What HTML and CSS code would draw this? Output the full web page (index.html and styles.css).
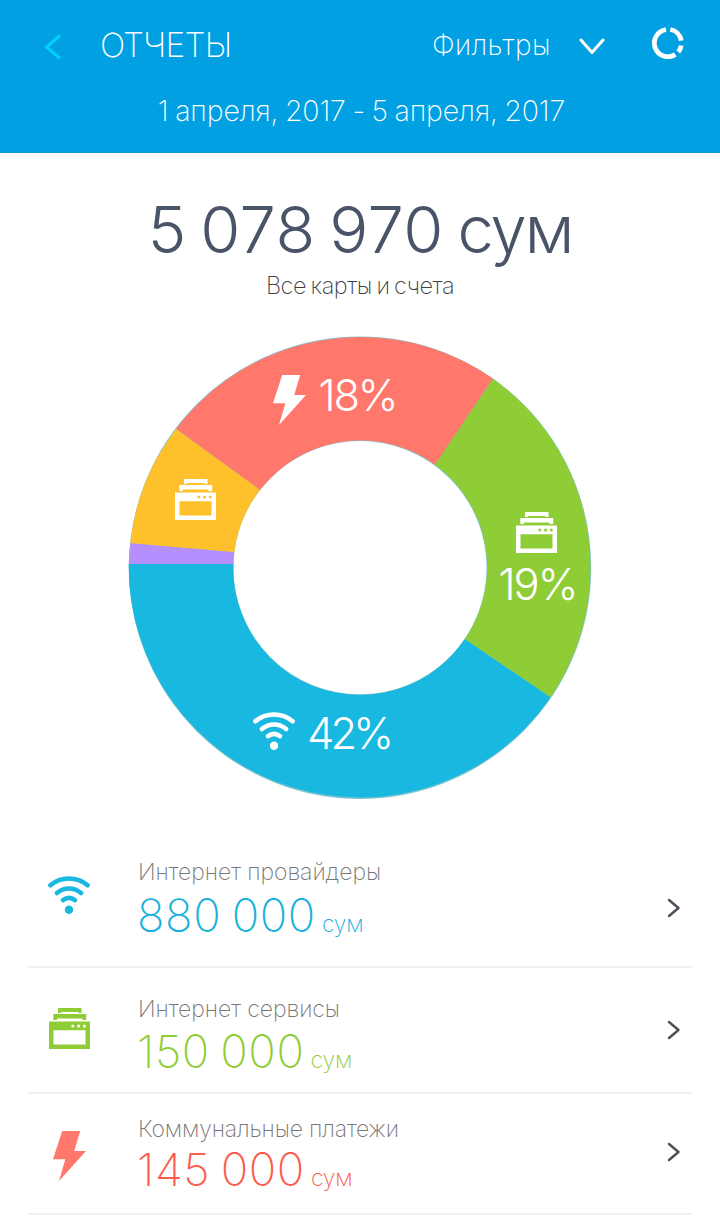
FILE: index.html
```html
<!DOCTYPE html>
<html lang="ru">
<head>
<meta charset="utf-8">
<title>Отчеты</title>
<link rel="stylesheet" href="styles.css">
</head>
<body>
<svg class="defs" width="0" height="0" aria-hidden="true">
  <defs>
    <symbol id="wifi" viewBox="0 0 42 38">
      <g fill="none" stroke="currentColor" stroke-width="4.6" stroke-linecap="round">
        <path d="M2.4 9.2C13 .3 29 .3 39.6 9.2"/>
        <path d="M8.9 17C16 10.9 26 10.9 33.1 17"/>
        <path d="M15 24.1C18.7 21.4 23.3 21.4 27 24.1"/>
      </g>
      <circle cx="21" cy="33.8" r="4.2" fill="currentColor"/>
    </symbol>
    <symbol id="oven" viewBox="0 0 41 41">
      <path fill="currentColor" fill-rule="evenodd" d="M9 0H32.5V5H29.5V4H12V5H9ZM4.3 6H37.2V12H33.4V10.5H8V12H4.3ZM0 13.5H41V41H0ZM4.5 22.3V36.6H36.5V22.3Z"/>
      <g class="oven-knobs"><circle cx="23.8" cy="18" r="1.5"/><circle cx="29.6" cy="18" r="1.5"/><circle cx="35.4" cy="18" r="1.5"/></g>
    </symbol>
    <symbol id="bolt" viewBox="0 0 33 50">
      <path fill="currentColor" d="M9.2 0H27.2L21.2 20H33L6 50L12.4 28.3H0Z"/>
    </symbol>
    <symbol id="chevron" viewBox="0 0 14 20">
      <path d="M2 2L11.5 10L2 18" fill="none" stroke="currentColor" stroke-width="2.4" stroke-linecap="round" stroke-linejoin="round"/>
    </symbol>
  </defs>
</svg>

<header class="header">
  <div class="bar">
    <svg class="back" width="18" height="26" viewBox="0 0 18 26"><path d="M16 1.5L2.5 13L16 24.5" fill="none" stroke="currentColor" stroke-width="3"/></svg>
    <h1 class="title">ОТЧЕТЫ</h1>
    <div class="filters">Фильтры</div>
    <svg class="drop" width="26" height="18" viewBox="0 0 26 18"><path d="M2 2L13 14.5L24 2" fill="none" stroke="currentColor" stroke-width="3" stroke-linecap="round" stroke-linejoin="round"/></svg>
    <svg class="ring" width="32" height="32" viewBox="0 0 32 32">
      <g fill="none" stroke="currentColor" stroke-width="4.8">
        <path d="M14 2.6A13.6 13.6 0 1 0 23.3 27.5"/>
        <path d="M18.3 2.5A13.6 13.6 0 0 1 29.3 13.7"/>
        <path d="M29.2 18.5A13.6 13.6 0 0 1 26.3 25"/>
      </g>
    </svg>
  </div>
  <div class="period">1 апреля, 2017 - 5 апреля, 2017</div>
</header>

<main>
  <section class="summary">
    <div class="total">5 078 970 <span class="currency">сум</span></div>
    <div class="scope">Все карты и счета</div>
    <svg class="chart" width="720" height="525" viewBox="0 304 720 525">
      <circle cx="360" cy="567.7" r="178.9" fill="none" stroke="#7fc4cf" stroke-width="104.6"/>
      <path fill="#18b8e1" d="M550.6 697.3A231.3 231.3 0 0 1 128.7 564H233.4A126.5 126.5 0 0 0 464.8 639Z"/>
      <path fill="#ff786b" d="M176 429A231.3 231.3 0 0 1 493 378.8L435 464.8A126.5 126.5 0 0 0 260 490Z"/>
      <path fill="#8fcd37" d="M493 378.8A231.3 231.3 0 0 1 550.6 697.3L464.8 639A126.5 126.5 0 0 0 435 464.8Z"/>
      <path fill="#ffc12b" d="M130.2 543.2A231.3 231.3 0 0 1 176 429L260 490A126.5 126.5 0 0 0 234.2 552.2Z"/>
      <path fill="#b68fff" d="M128.7 564A231.3 231.3 0 0 1 130.2 543.2L234.2 552.2A126.5 126.5 0 0 0 233.4 564Z"/>
      <g class="chart-marks">
        <use href="#bolt" x="273" y="375" width="33" height="50"/>
        <text x="318.5" y="411" textLength="80">18%</text>
        <g class="on-yellow"><use href="#oven" x="175" y="479" width="41" height="41"/></g>
        <g class="on-green"><use href="#oven" x="516" y="512" width="41" height="41"/></g>
        <text x="498.5" y="600" textLength="80">19%</text>
        <use href="#wifi" x="253" y="712" width="42" height="38"/>
        <text x="307" y="749" textLength="87">42%</text>
      </g>
    </svg>
  </section>

  <ul class="list">
    <li class="row row-blue">
      <svg class="icon" width="42" height="38"><use href="#wifi"/></svg>
      <div class="info">
        <div class="label">Интернет провайдеры</div>
        <div class="amount">880 000<span class="unit">сум</span></div>
      </div>
      <svg class="more" width="14" height="20"><use href="#chevron"/></svg>
    </li>
    <li class="row row-green">
      <svg class="icon" width="41" height="41"><use href="#oven"/></svg>
      <div class="info">
        <div class="label">Интернет сервисы</div>
        <div class="amount">150 000<span class="unit">сум</span></div>
      </div>
      <svg class="more" width="14" height="20"><use href="#chevron"/></svg>
    </li>
    <li class="row row-red">
      <svg class="icon" width="33" height="50"><use href="#bolt"/></svg>
      <div class="info">
        <div class="label">Коммунальные платежи</div>
        <div class="amount">145 000<span class="unit">сум</span></div>
      </div>
      <svg class="more" width="14" height="20"><use href="#chevron"/></svg>
    </li>
  </ul>
</main>
</body>
</html>
```
FILE: styles.css
```css
* { box-sizing: border-box; }
body {
  margin: 0;
  width: 720px;
  height: 1232px;
  overflow: hidden;
  background: #fff;
  font-family: Inter, "Liberation Sans", sans-serif;
  font-weight: 300;
  white-space: nowrap;
}
svg { display: block; flex: none; }
.defs { position: absolute; }

.header { height: 153px; background: #00a0e3; color: #fff; border-bottom: 1px solid #0d9ccb; }
.bar { display: flex; align-items: center; height: 90px; padding-left: 44px; }
.back { color: #00d2fb; margin-top: 3px; }
.title { margin: 0 0 0 38px; width: 332px; font-size: 33.5px; font-weight: 250; line-height: 44px; letter-spacing: -.8px; }
.filters { width: 147px; font-size: 28px; font-weight: 250; line-height: 40px; letter-spacing: .4px; }
.drop { margin-top: 4px; }
.ring { margin: -4px 0 0 47px; }
.period { padding-left: 3px; text-align: center; font-size: 28.5px; font-weight: 250; line-height: 41px; letter-spacing: -.15px; word-spacing: -1.2px; }

.summary { padding-top: 38px; text-align: center; }
.total { font-size: 65px; font-weight: 275; line-height: 77px; color: #4a5468; word-spacing: -5px; letter-spacing: .4px; }
.currency { letter-spacing: -2px; }
.scope { font-size: 23.5px; font-weight: 250; line-height: 36px; color: #3d3f45; letter-spacing: -.5px; word-spacing: -1.5px; }
.chart-marks { color: #fff; fill: #fff; font-size: 43.5px; font-weight: 300; text-align: left; }
.oven-knobs { fill: var(--knob, #fff); }
.on-yellow { --knob: #ffc12b; }
.on-green { --knob: #8fcd37; }

.list { margin: 0 28px; padding: 0; list-style: none; }
.row { display: flex; align-items: flex-start; border-bottom: 2px solid #f1f1f2; }
.icon { color: var(--icon); margin-left: 20px; }
.info { width: 529px; }
.label { font-size: 23px; font-weight: 250; line-height: 30px; color: #777; letter-spacing: -.06px; }
.amount { margin-left: -1px; font-size: 45.5px; font-weight: 250; color: var(--sum); word-spacing: -3px; letter-spacing: .6px; }
.unit { margin-left: 6px; font-size: 23px; letter-spacing: -.2px; }
.more { color: #4a4e56; }

.row-blue { --icon: #18b8e1; --sum: #18b1dc; height: 139px; padding-top: 28px; }
.row-blue .icon { margin-top: 19px; margin-right: 48px; }
.row-blue .amount { line-height: 57px; }
.row-blue .more { margin-top: 41px; }

.row-green { --icon: #8fcd37; --sum: #8fcd37; height: 126px; padding-top: 26px; }
.row-green .icon { margin: 14px 48px 0 21px; }
.row-green .amount { line-height: 56px; }
.row-green .more { margin-top: 26px; }

.row-red { --icon: #ff786b; --sum: #fb5c4b; height: 121px; padding-top: 20px; }
.row-red .icon { margin: 17px 52px 0 25px; }
.row-red .label { letter-spacing: -.2px; }
.row-red .amount { line-height: 52px; }
.row-red .more { margin-top: 28px; }
```
